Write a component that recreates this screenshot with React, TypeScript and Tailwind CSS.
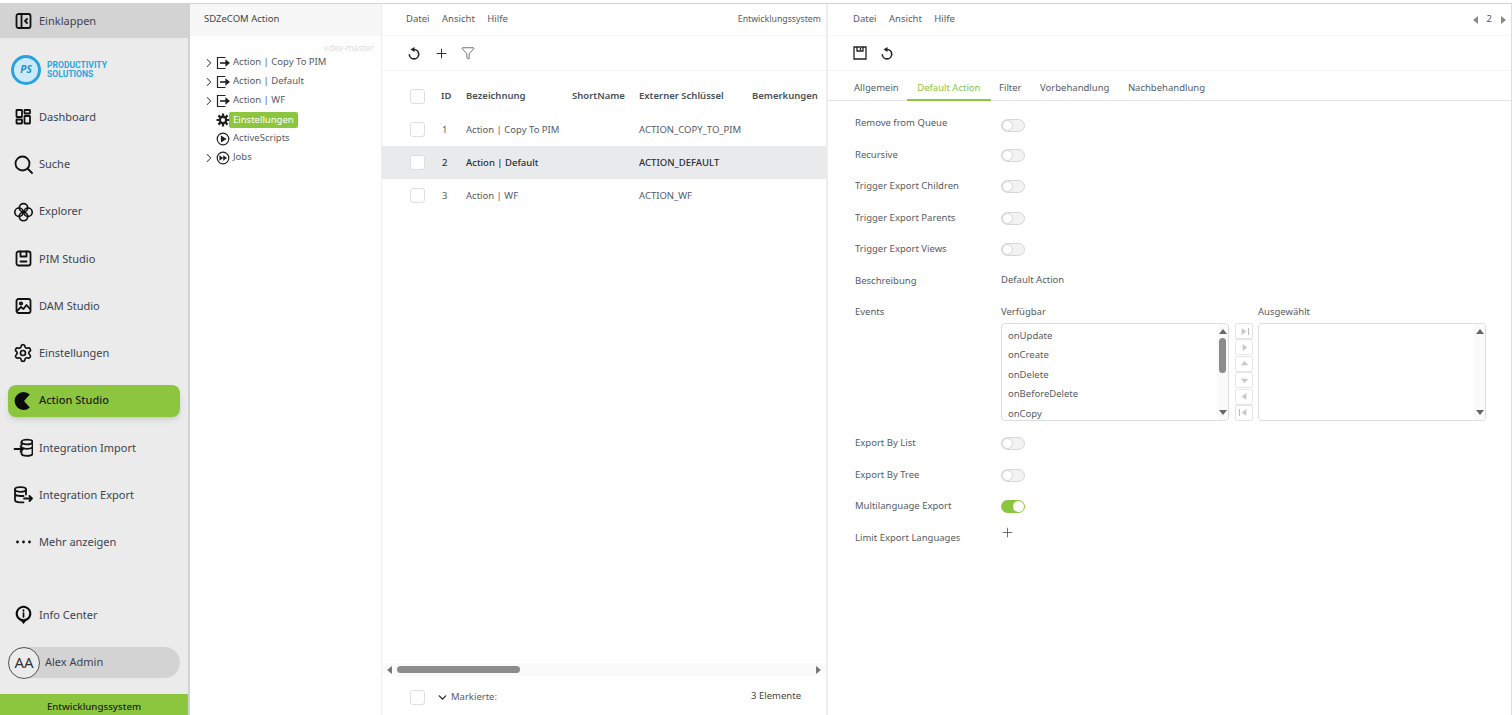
import { ReactNode } from "react"
import { ChevronDown, ChevronRight, Filter, Plus, Settings } from "lucide-react"

const sideStroke = { fill: "none", stroke: "#111", strokeWidth: 1.8, strokeLinecap: "round", strokeLinejoin: "round" } as const

function SideIcon({ children }: { children: ReactNode }) {
  return (
    <svg viewBox="0 0 20 20" className="h-5 w-5 shrink-0" {...sideStroke}>
      {children}
    </svg>
  )
}

const navItems: { label: string; icon: ReactNode }[] = [
  {
    label: "Dashboard",
    icon: (
      <SideIcon>
        <rect x="3.500" y="3" width="5.500" height="7" rx="0.500" />
        <rect x="11.500" y="3" width="5.500" height="3.500" rx="0.500" />
        <rect x="3.500" y="12.500" width="5.500" height="4" rx="0.500" />
        <rect x="11.500" y="9" width="5.500" height="7.500" rx="0.500" />
      </SideIcon>
    ),
  },
  {
    label: "Suche",
    icon: (
      <SideIcon>
        <circle cx="9.500" cy="9.500" r="7" />
        <path d="M14.500 14.500l4.500 4.500" />
      </SideIcon>
    ),
  },
  {
    label: "Explorer",
    icon: (
      <svg viewBox="0 0 20 20" className="h-5 w-5 shrink-0" fill="none" stroke="#111" strokeWidth="1.600">
        <circle cx="10.500" cy="5.800" r="4.200" />
        <circle cx="15" cy="10.200" r="4.200" />
        <circle cx="10.500" cy="14.600" r="4.200" />
        <circle cx="6" cy="10.200" r="4.200" />
      </svg>
    ),
  },
  {
    label: "PIM Studio",
    icon: (
      <SideIcon>
        <rect x="3.500" y="2.500" width="14" height="14" rx="2" />
        <path d="M7.500 2.500v5h6v-5M7.500 12.500h6" />
      </SideIcon>
    ),
  },
  {
    label: "DAM Studio",
    icon: (
      <SideIcon>
        <rect x="3.500" y="3" width="14" height="14" rx="2" />
        <circle cx="8" cy="7.500" r="1.200" />
        <path d="M4 15l4-4 2.500 2 3-4 3.500 4" />
      </SideIcon>
    ),
  },
  {
    label: "Einstellungen",
    icon: <Settings className="h-5 w-5 shrink-0 text-[#111]" strokeWidth={2} />,
  },
  {
    label: "Action Studio",
    icon: (
      <svg viewBox="0 0 20 20" className="h-5 w-5 shrink-0" fill="#0b0b0b">
        <path d="M16.800 3.500A9 9 0 1 0 16.800 16.500L11 10z" />
      </svg>
    ),
  },
  {
    label: "Integration Import",
    icon: (
      <SideIcon>
        <ellipse cx="14" cy="4" rx="5.500" ry="2.300" />
        <path d="M8.500 4v3.500M19.500 4v11.500c0 1.300-2.500 2.300-5.500 2.300s-5.500-1-5.500-2.300v-1.500M10 10c1 .5 2.500.8 4 .8s4-.4 5.500-1.300" />
        <path d="M1.500 11h8.500M7.500 8.500L10 11l-2.500 2.500" />
      </SideIcon>
    ),
  },
  {
    label: "Integration Export",
    icon: (
      <SideIcon>
        <ellipse cx="7.500" cy="4.500" rx="5.500" ry="2.300" />
        <path d="M2 4.500v10.500c0 1.300 2.500 2.300 5.500 2.300h3M13 4.500v5M2 9.500c1 1 3.200 1.500 5.500 1.500h3" />
        <path d="M11 13.500h8M16.500 11l2.500 2.500-2.500 2.500" />
      </SideIcon>
    ),
  },
  {
    label: "Mehr anzeigen",
    icon: (
      <svg viewBox="0 0 20 20" className="h-5 w-5 shrink-0" fill="#111">
        <circle cx="4.500" cy="10" r="1.400" />
        <circle cx="10.500" cy="10" r="1.400" />
        <circle cx="16.500" cy="10" r="1.400" />
      </svg>
    ),
  },
]

function Sidebar() {
  return (
    <aside className="flex w-[190px] shrink-0 flex-col border-r-2 border-[#d2d2d2] bg-[#ebebeb] text-[11px] text-[#3c4350]">
      <div className="flex h-[34px] items-center gap-[6px] bg-[#d3d3d3] pl-[13px]">
        <SideIcon>
          <rect x="3.500" y="3" width="14" height="14" rx="2" />
          <path d="M8.500 3v14M14 8l-2 2 2 2" />
        </SideIcon>
        <span>Einklappen</span>
      </div>
      <div className="flex h-[55.500px] items-center gap-[6px] pl-[11px] pt-[8px]">
        <div className="flex h-[30px] w-[30px] items-center justify-center rounded-full border-[3px] border-[#29a3e0] bg-[#cdeafa]">
          <span className="text-[10px] font-bold italic text-[#1d8fd0]">PS</span>
        </div>
        <div className="origin-left scale-x-[0.9] font-['Roboto',sans-serif] text-[9.500px] font-bold leading-[8.500px] text-[#27a7e3]">
          <div>PRODUCTIVITY</div>
          <div>SOLUTIONS</div>
        </div>
      </div>
      {navItems.map((item) =>
        item.label === "Action Studio" ? (
          <div key={item.label} className="flex h-[47.250px] items-center px-2">
            <div className="flex h-[32px] w-full items-center gap-[6px] rounded-lg bg-[#8cc63f] pl-[5px] font-medium text-[#1d2410] shadow-md">
              {item.icon}
              <span>{item.label}</span>
            </div>
          </div>
        ) : (
          <div key={item.label} className="flex h-[47.250px] items-center gap-[6px] pl-[13px]">
            {item.icon}
            <span>{item.label}</span>
          </div>
        )
      )}
      <div className="flex-1" />
      <div className="flex h-[32px] items-center gap-[6px] pl-[13px]">
        <svg viewBox="0 0 20 20" className="h-5 w-5 shrink-0">
          <path d="M10.500 19l-2.500-3A7.800 7.800 0 1 1 13 16z" fill="#0b0b0b" />
          <circle cx="10.500" cy="8.500" r="5.700" fill="#ebebeb" />
          <path d="M10.500 8v4M10.500 5v1" stroke="#0b0b0b" strokeWidth="1.700" strokeLinecap="round" />
        </svg>
        <span>Info Center</span>
      </div>
      <div className="mt-[16px] px-2">
        <div className="flex h-[31px] items-center gap-[5px] rounded-full bg-[#d3d3d3]">
          <div className="flex h-[32px] w-[32px] items-center justify-center rounded-full border border-[#555] bg-[#ebebeb] text-[15px] text-[#333]">
            AA
          </div>
          <span>Alex Admin</span>
        </div>
      </div>
      <div className="mt-[16px] flex h-[21px] items-center justify-center bg-[#8cc63f] pt-[5px] text-[9.700px] font-medium text-[#1d2410]">
        Entwicklungssystem
      </div>
    </aside>
  )
}

const treeItems = [
  { label: "Action | Copy To PIM", kind: "action" },
  { label: "Action | Default", kind: "action" },
  { label: "Action | WF", kind: "action" },
  { label: "Einstellungen", kind: "settings" },
  { label: "ActiveScripts", kind: "scripts" },
  { label: "Jobs", kind: "jobs" },
]

function TreeIcon({ kind }: { kind: string }) {
  return (
    <svg viewBox="0 0 14 14" className="h-[14px] w-[14px] shrink-0" fill="none" stroke="#222" strokeWidth="1.200">
      {kind === "action" && (
        <>
          <path d="M9.500 1.500H1.500v11h8" />
          <path d="M4 7h6" strokeWidth="1.600" />
          <path d="M10 4.500L13 7l-3 2.500z" fill="#222" />
        </>
      )}
      {kind === "settings" && (
        <>
          <path d="M7 .5v13M.5 7h13M2.400 2.400l9.200 9.200M11.600 2.400l-9.200 9.200" strokeWidth="2.200" />
          <circle cx="7" cy="7" r="4.400" fill="#222" stroke="none" />
          <circle cx="7" cy="7" r="2" fill="#fff" stroke="none" />
        </>
      )}
      {kind === "scripts" && (
        <>
          <circle cx="7" cy="7" r="5.800" />
          <path d="M5.500 4.500L9.500 7l-4 2.500z" fill="#222" />
        </>
      )}
      {kind === "jobs" && (
        <>
          <circle cx="7" cy="7" r="5.800" />
          <path d="M4 5.500L6.200 7 4 8.500zM7.800 5.500L10 7 7.800 8.500z" fill="#222" />
        </>
      )}
    </svg>
  )
}

function TreePanel() {
  return (
    <section className="flex w-[192px] shrink-0 flex-col border-r border-[#eeeeee] text-[9.500px] text-[#555b66]">
      <div className="flex h-[32px] items-center bg-[#f7f7f7] pb-[1px] pl-[14px] text-[#444]">SDZeCOM Action</div>
      <div className="h-[17px] pr-[7px] pt-[6px] text-right text-[8.600px] leading-[12px] text-[#dcdcdc]">vdev-master</div>
      <div className="flex flex-col pl-[12px]">
        {treeItems.map((item) => (
          <div key={item.label} className="flex h-[19px] items-center">
            <span className="flex w-[14px] justify-start">
              {(item.kind === "action" || item.kind === "jobs") && (
                <ChevronRight className="h-[14px] w-[14px] text-[#444]" strokeWidth={1.800} />
              )}
            </span>
            <TreeIcon kind={item.kind} />
            {item.kind === "settings" ? (
              <span className="-ml-px rounded-[2px] bg-[#8cc63f] px-[4px] leading-[16px] text-white">{item.label}</span>
            ) : (
              <span className="ml-[3px]">{item.label}</span>
            )}
          </div>
        ))}
      </div>
    </section>
  )
}

function Checkbox() {
  return <div className="h-[15px] w-[15px] rounded-[3px] border border-[#dedede] bg-white" />
}

function UndoIcon() {
  return (
    <svg viewBox="0 0 14 14" className="h-[14px] w-[14px] shrink-0" fill="none" stroke="#222" strokeWidth="1.600">
      <path d="M7 3.500a4.700 4.700 0 1 1-4.700 4.700" />
      <polygon points="7.500,1 7.500,6 3.500,3.500" fill="#222" stroke="none" />
    </svg>
  )
}

const tableCols = "grid grid-cols-[31px_25px_106px_67px_113px_1fr] items-center"

const rows = [
  { id: 1, name: "Action | Copy To PIM", key: "ACTION_COPY_TO_PIM" },
  { id: 2, name: "Action | Default", key: "ACTION_DEFAULT", active: true },
  { id: 3, name: "Action | WF", key: "ACTION_WF" },
]

function MenuBar({ right, className = "" }: { right?: ReactNode; className?: string }) {
  return (
    <div className={`flex h-[32px] items-center justify-between border-b border-[#f6f6f6] text-[9.500px] text-[#555b66] ${className}`}>
      <div className="flex gap-[12.500px]">
        <span>Datei</span>
        <span>Ansicht</span>
        <span>Hilfe</span>
      </div>
      {right}
    </div>
  )
}

function ListPanel() {
  return (
    <section className="flex w-[446px] shrink-0 flex-col border-r-2 border-[#eeeeee] text-[9.500px] text-[#555b66]">
      <MenuBar className="pl-[24px] pr-[5px]" right={<span className="text-[8.750px]">Entwicklungssystem</span>} />
      <div className="flex h-[35px] items-center gap-[13px] border-b border-[#f3f3f3] pl-[25px] text-[#222]">
        <UndoIcon />
        <Plus className="h-[15px] w-[15px]" strokeWidth={1.500} />
        <Filter className="-ml-px h-[14px] w-[14px]" strokeWidth={1.100} />
      </div>
      <div className={`${tableCols} h-[42px] pl-[28px] pt-[8px] font-semibold text-[#4a505a]`}>
        <Checkbox />
        <span>ID</span>
        <span>Bezeichnung</span>
        <span>ShortName</span>
        <span>Externer Schlüssel</span>
        <span>Bemerkungen</span>
      </div>
      {rows.map((row) => (
        <div
          key={row.id}
          className={`${tableCols} h-[33px] pl-[28px] ${row.active ? "bg-[#e9eaec] font-medium text-[#2a2e36]" : ""}`}
        >
          <Checkbox />
          <span className="pl-[1px] pt-[1px]">{row.id}</span>
          <span className="whitespace-nowrap pt-[1px]">{row.name}</span>
          <span />
          <span className="col-span-2 whitespace-nowrap pt-[1px]">{row.key}</span>
        </div>
      ))}
      <div className="flex-1" />
      <div className="flex h-[13px] items-center bg-[#fafafa] px-[3px]">
        <Arrow dir="left" className="h-[10px] w-[10px] text-[#777]" />
        <div className="ml-[2px] h-[7px] w-[123px] rounded-full bg-[#8c8c8c]" />
        <div className="flex-1" />
        <Arrow dir="right" className="h-[10px] w-[10px] text-[#777]" />
      </div>
      <div className="flex h-[39px] items-center pl-[28px] pr-[25px] pt-[3px]">
        <Checkbox />
        <ChevronDown className="ml-[11px] h-[13px] w-[13px] text-[#222]" strokeWidth={2.400} />
        <span className="ml-[2px]">Markierte:</span>
        <span className="ml-auto -translate-y-px text-[#444]">3 Elemente</span>
      </div>
    </section>
  )
}

function Arrow({ dir, className = "" }: { dir: "left" | "right" | "up" | "down"; className?: string }) {
  const points = {
    left: "7,1 7,9 2,5",
    right: "3,1 3,9 8,5",
    up: "1,7 9,7 5,2",
    down: "1,3 9,3 5,8",
  }
  return (
    <svg viewBox="0 0 10 10" className={`shrink-0 ${className}`} fill="currentColor">
      <polygon points={points[dir]} />
    </svg>
  )
}

function Toggle({ on = false }: { on?: boolean }) {
  return (
    <div
      className={`flex h-[13px] w-[24px] items-center rounded-full border ${
        on ? "justify-end border-[#8cc63f] bg-[#8cc63f]" : "justify-start border-[#d6d6d6] bg-[#f2f2f2]"
      }`}
    >
      <div className={`h-[11px] w-[11px] rounded-full ${on ? "bg-white" : "border border-[#d6d6d6] bg-white"}`} />
    </div>
  )
}

function FormRow({ label, children }: { label: string; children?: ReactNode }) {
  return (
    <div className="flex h-[31.500px] items-start">
      <span className="w-[146px] shrink-0 pt-[3px] text-[#555b66]">{label}</span>
      {children}
    </div>
  )
}

function ScrollCol({ thumb }: { thumb?: boolean }) {
  return (
    <div className="flex w-[11px] flex-col items-center bg-[#fafafa] py-[3px]">
      <Arrow dir="up" className="h-[10px] w-[10px] text-[#666]" />
      {thumb && <div className="mt-[1px] h-[35px] w-[7px] rounded-full bg-[#8c8c8c]" />}
      <div className="flex-1" />
      <Arrow dir="down" className="h-[10px] w-[10px] text-[#666]" />
    </div>
  )
}

const moveButtons: { dir: "left" | "right" | "up" | "down"; bar?: "before" | "after" }[] = [
  { dir: "right", bar: "after" },
  { dir: "right" },
  { dir: "up" },
  { dir: "down" },
  { dir: "left" },
  { dir: "left", bar: "before" },
]

function DualList() {
  return (
    <div className="flex flex-col">
      <div className="flex h-[18px]">
        <span className="w-[257px]">Verfügbar</span>
        <span>Ausgewählt</span>
      </div>
      <div className="flex h-[98px] items-stretch">
        <div className="flex w-[228px] overflow-hidden rounded-[4px] border border-[#dcdcdc]">
          <div className="flex flex-1 flex-col gap-[5.500px] pl-[6px] pt-[4.500px] leading-[14px]">
            <span>onUpdate</span>
            <span>onCreate</span>
            <span>onDelete</span>
            <span>onBeforeDelete</span>
            <span>onCopy</span>
          </div>
          <ScrollCol thumb />
        </div>
        <div className="ml-[6px] mr-[5px] flex w-[18px] flex-col gap-[0.400px]">
          {moveButtons.map((b, i) => (
            <div key={i} className="flex h-[16px] items-center justify-center rounded-[2px] border border-[#e6e6e6] text-[#c8c8c8]">
              {b.bar === "before" && <div className="h-[7px] w-px bg-[#bbb]" />}
              <Arrow dir={b.dir} className="h-[9px] w-[9px]" />
              {b.bar === "after" && <div className="h-[7px] w-px bg-[#bbb]" />}
            </div>
          ))}
        </div>
        <div className="flex w-[228px] justify-end overflow-hidden rounded-[4px] border border-[#dcdcdc]">
          <ScrollCol />
        </div>
      </div>
    </div>
  )
}

function DetailPanel() {
  return (
    <section className="flex min-w-0 flex-1 flex-col border-r border-[#dddddd] text-[9.500px] text-[#555b66]">
      <MenuBar
        className="pl-[25px] pr-[3px]"
        right={
          <div className="flex items-center gap-[6px]">
            <Arrow dir="left" className="h-[10px] w-[10px] text-[#888]" />
            <span>2</span>
            <Arrow dir="right" className="h-[10px] w-[10px] text-[#888]" />
          </div>
        }
      />
      <div className="flex h-[35px] items-center gap-[13px] border-b border-[#f3f3f3] pl-[25px] text-[#222]">
        <svg viewBox="0 0 14 14" className="h-[14px] w-[14px] shrink-0" fill="none" stroke="#222" strokeWidth="1.300">
          <path d="M1 1h12v12H1z" />
          <path d="M4 1v4h6V1M7.500 2v2" />
        </svg>
        <UndoIcon />
      </div>
      <div className="flex h-[30px] items-stretch gap-[18.500px] border-b border-[#e6e6e6] pl-[26px]">
        <span className="flex items-center pt-[6px]">Allgemein</span>
        <span className="-mx-[10px] -mb-px flex items-center border-b-2 border-[#8cc63f] px-[10px] pt-[6px] text-[#8cc63f]">Default Action</span>
        <span className="flex items-center pt-[6px]">Filter</span>
        <span className="flex items-center pt-[6px]">Vorbehandlung</span>
        <span className="flex items-center pt-[6px]">Nachbehandlung</span>
      </div>
      <div className="flex flex-col pl-[27px] pt-[12px]">
        <FormRow label="Remove from Queue"><div className="pt-[6px]"><Toggle /></div></FormRow>
        <FormRow label="Recursive"><div className="pt-[4px]"><Toggle /></div></FormRow>
        <FormRow label="Trigger Export Children"><div className="pt-[4px]"><Toggle /></div></FormRow>
        <FormRow label="Trigger Export Parents"><div className="pt-[4px]"><Toggle /></div></FormRow>
        <FormRow label="Trigger Export Views"><div className="pt-[4px]"><Toggle /></div></FormRow>
        <FormRow label="Beschreibung"><span className="pt-[2px]">Default Action</span></FormRow>
        <div className="flex h-[131px] items-start">
          <span className="w-[146px] shrink-0 pt-[3px]">Events</span>
          <div className="pt-[3px]"><DualList /></div>
        </div>
        <FormRow label="Export By List"><div className="pt-[4px]"><Toggle /></div></FormRow>
        <FormRow label="Export By Tree"><div className="pt-[4px]"><Toggle /></div></FormRow>
        <FormRow label="Multilanguage Export"><div className="pt-[4px]"><Toggle on /></div></FormRow>
        <FormRow label="Limit Export Languages"><Plus className="-ml-px -mt-[3px] h-[15px] w-[15px] text-[#444]" strokeWidth={1.200} /></FormRow>
      </div>
    </section>
  )
}

export default function App() {
  return (
    <div className="h-[715px] w-[1512px] overflow-hidden bg-white pt-[3px] font-['Noto_Sans',sans-serif]">
      <div className="flex h-full border-t border-[#d5d5d5]">
        <Sidebar />
        <TreePanel />
        <ListPanel />
        <DetailPanel />
      </div>
    </div>
  )
}
